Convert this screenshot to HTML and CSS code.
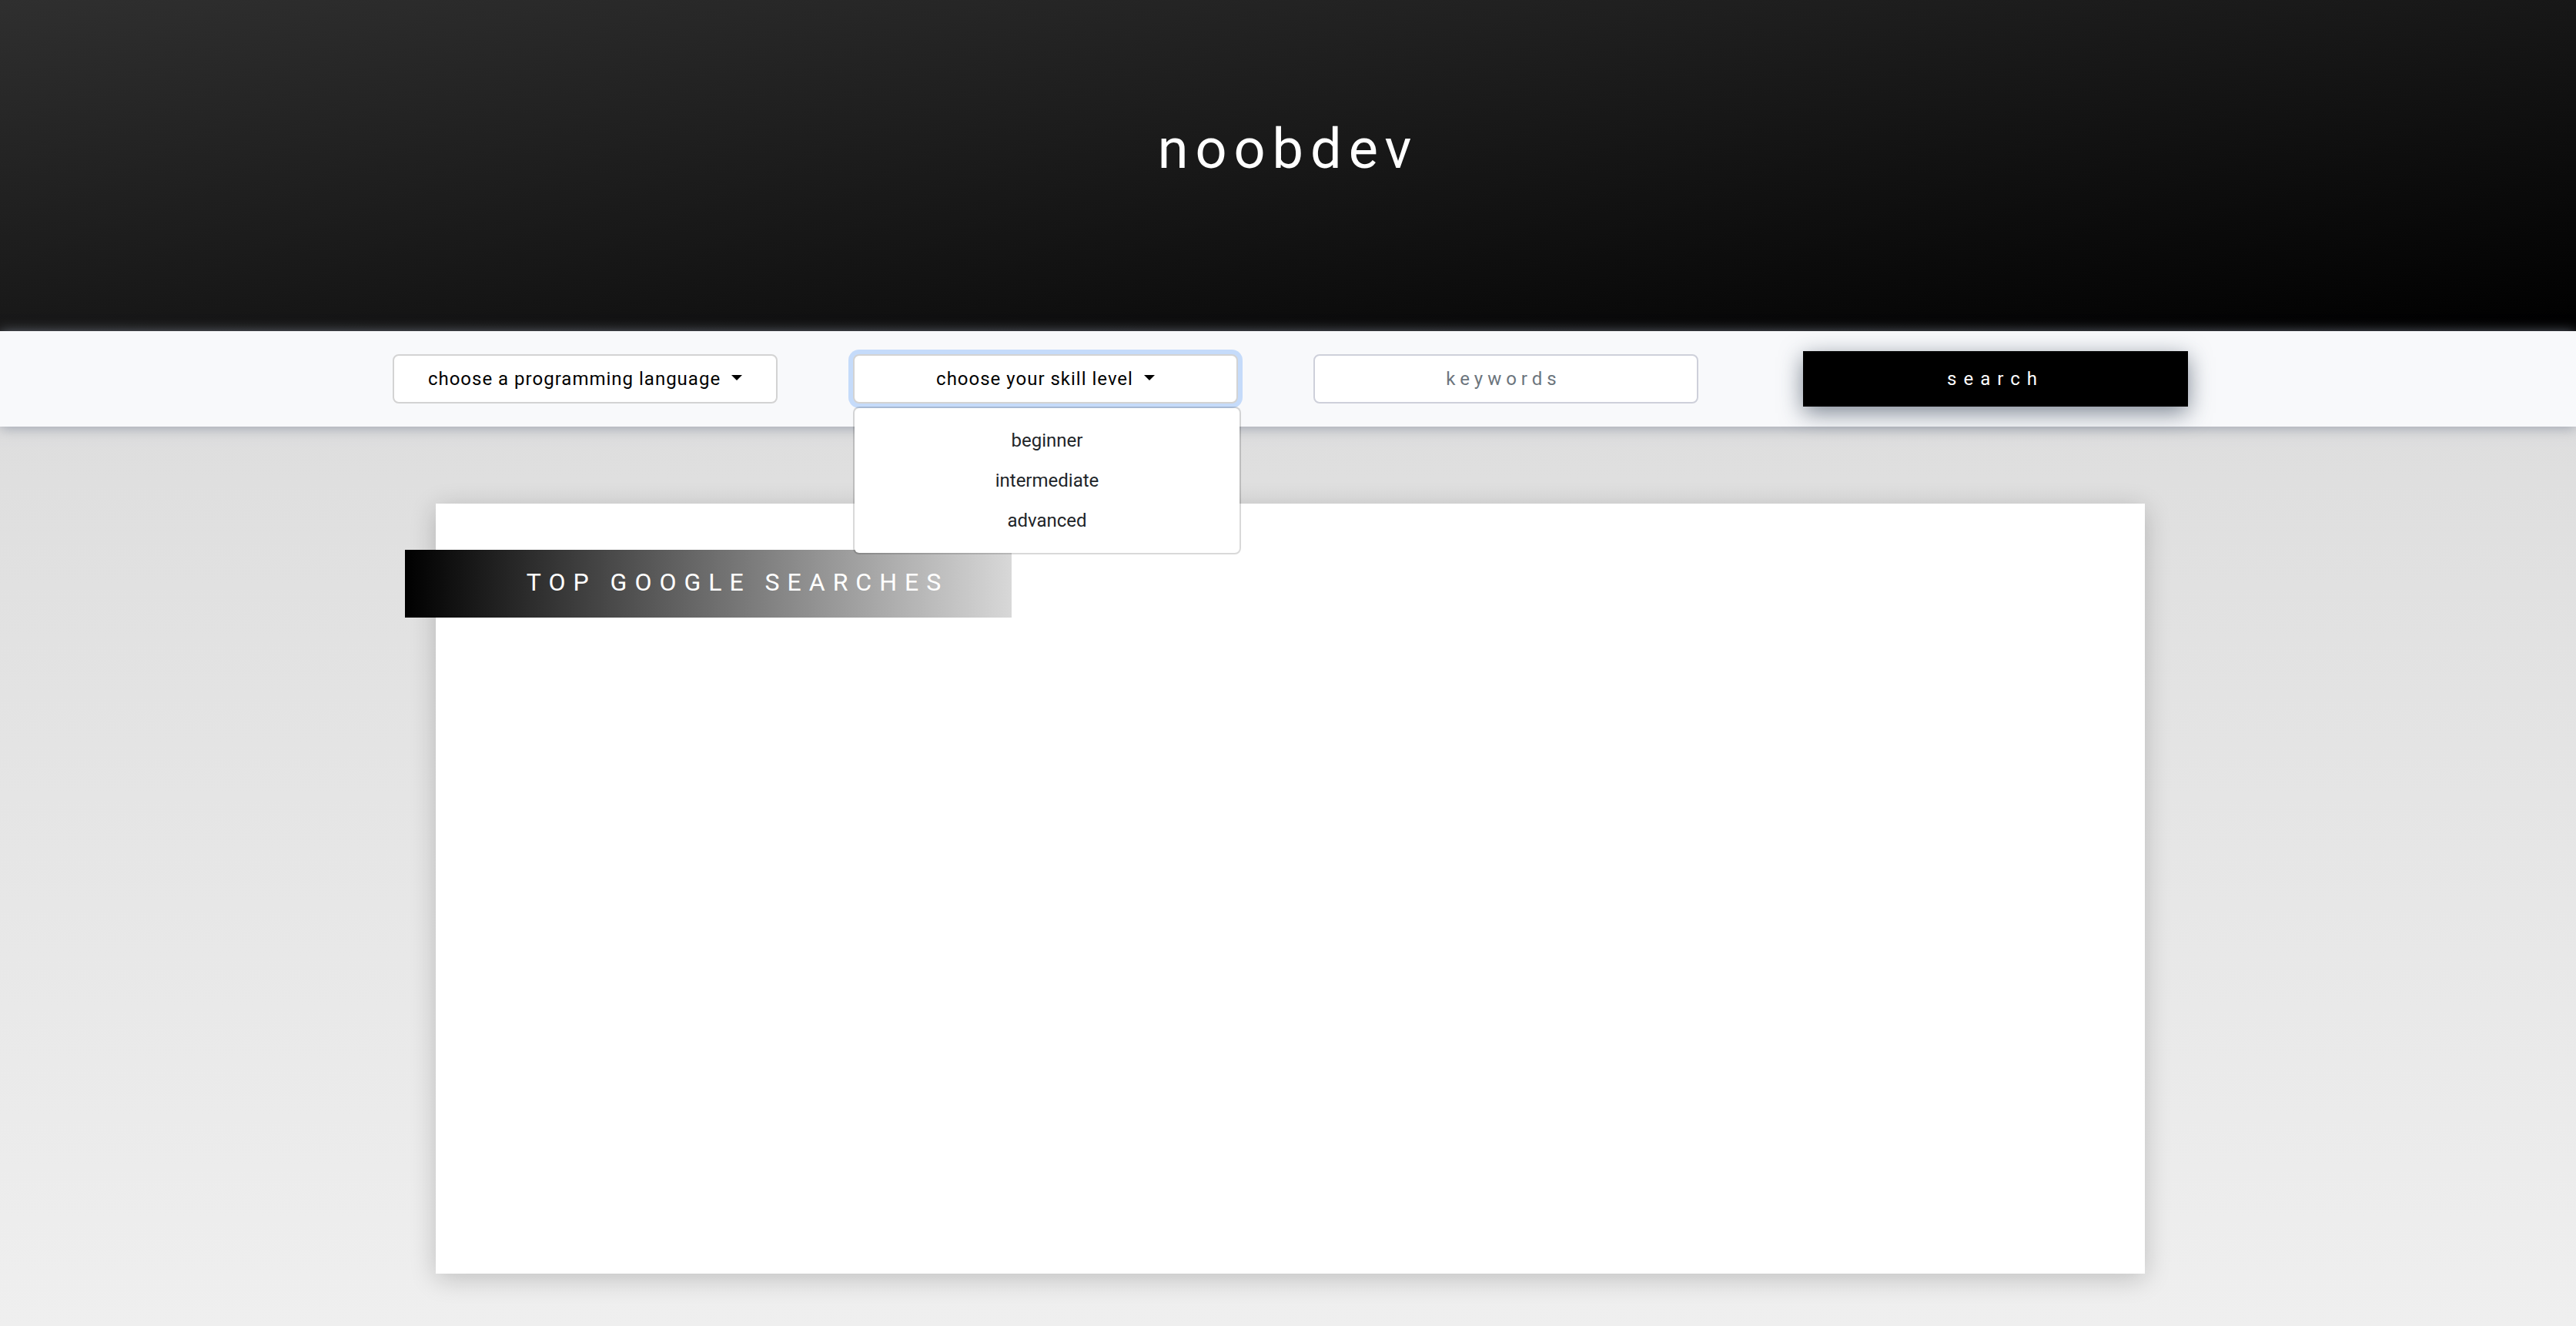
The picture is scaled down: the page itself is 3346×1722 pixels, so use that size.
FILE: index.html
```html
<!DOCTYPE html>
<html lang="en">
<head>
<meta charset="utf-8">
<meta name="viewport" content="width=device-width, initial-scale=1">
<title>noobdev</title>
<link rel="stylesheet" href="styles.css">
</head>
<body>
<header class="hero"><h1 class="hero-title">noobdev</h1></header>
<form class="toolbar">
  <div class="field">
    <button type="button" class="toggle" aria-haspopup="true" aria-expanded="false">choose a programming language<span class="caret"></span></button>
  </div>
  <div class="field">
    <button type="button" class="toggle toggle-open" aria-haspopup="true" aria-expanded="true">choose your skill level<span class="caret"></span></button>
    <div class="menu">
      <a class="menu-item" href="#beginner">beginner</a>
      <a class="menu-item" href="#intermediate">intermediate</a>
      <a class="menu-item" href="#advanced">advanced</a>
    </div>
  </div>
  <div class="field">
    <input class="keywords" type="text" placeholder="keywords" aria-label="keywords">
  </div>
  <div class="field field-submit">
    <button type="submit" class="search">search</button>
  </div>
</form>
<main class="results">
  <section class="panel">
    <h2 class="ribbon">TOP GOOGLE SEARCHES</h2>
  </section>
</main>
</body>
</html>
```
FILE: styles.css
```css
* {
  box-sizing: border-box;
}

body {
  margin: 0;
  min-height: 100vh;
  display: flex;
  flex-direction: column;
  font-family: Roboto, "Liberation Sans", sans-serif;
  font-size: 24px;
  line-height: 36px;
  color: #212529;
  background: #eee;
}

.hero {
  display: flex;
  justify-content: center;
  padding: 150px 0 192px;
  background: linear-gradient(to bottom right, #2f2f2f, #000);
}

.hero-title {
  margin: 0;
  font-size: 72px;
  line-height: 88px;
  font-weight: 400;
  letter-spacing: 9px;
  color: #fff;
}

.toolbar {
  position: relative;
  z-index: 1;
  display: flex;
  align-items: center;
  justify-content: center;
  gap: 98px;
  padding: 26px 0 26px 6px;
  background: #f8f9fb;
  box-shadow: 0 2px 16px rgba(140, 148, 162, 0.8);
}

.field {
  position: relative;
  flex: 0 1 500px;
}

.field-submit {
  margin-left: 38px;
}

.toggle,
.keywords,
.search {
  display: block;
  width: 100%;
  font: inherit;
  text-align: center;
}

.toggle,
.keywords {
  height: 64px;
  padding: 0 12px;
  border: 2px solid #d3d3d3;
  border-radius: 8px;
  background: #fff;
}

.toggle {
  letter-spacing: 1px;
  color: #000;
}

.toggle-open {
  outline: none;
  box-shadow: 0 0 0 6px #c5dbfa;
}

.caret {
  display: inline-block;
  margin-left: 14px;
  vertical-align: 6px;
  border: 7px solid transparent;
  border-top-color: #000;
  border-bottom: 0;
}

.keywords {
  padding-right: 18px;
  border-color: #ced0da;
  letter-spacing: 6px;
}

.keywords::placeholder {
  color: #6c757d;
  opacity: 1;
}

.search {
  height: 72px;
  border: 0;
  background: #000;
  color: #fff;
  letter-spacing: 9px;
  box-shadow: 0 8px 30px rgba(40, 55, 75, 0.6);
}

.menu {
  position: absolute;
  top: 100%;
  left: 0;
  width: 504px;
  margin-top: 4px;
  padding: 16px 0;
  border: 2px solid rgba(0, 0, 0, 0.15);
  border-radius: 8px;
  background: #fff;
  background-clip: padding-box;
}

.menu-item {
  display: block;
  padding: 8px 0;
  text-align: center;
  color: #212529;
  text-decoration: none;
}

.results {
  flex: 1;
  padding: 100px 32px 68px 38px;
  background: linear-gradient(#dedede, #efefef);
}

.panel {
  max-width: 2220px;
  min-height: 1000px;
  margin: 0 auto;
  padding: 60px 0;
  background: #fff;
  box-shadow: 0 6px 32px rgba(0, 0, 0, 0.2);
}

.ribbon {
  width: 788px;
  margin: 0 0 0 -40px;
  padding: 24px 0 28px 76px;
  font-size: 32px;
  line-height: 36px;
  font-weight: 400;
  letter-spacing: 10px;
  text-align: center;
  color: #fff;
  background: linear-gradient(to right, #000, #d8d8d8);
}
```
